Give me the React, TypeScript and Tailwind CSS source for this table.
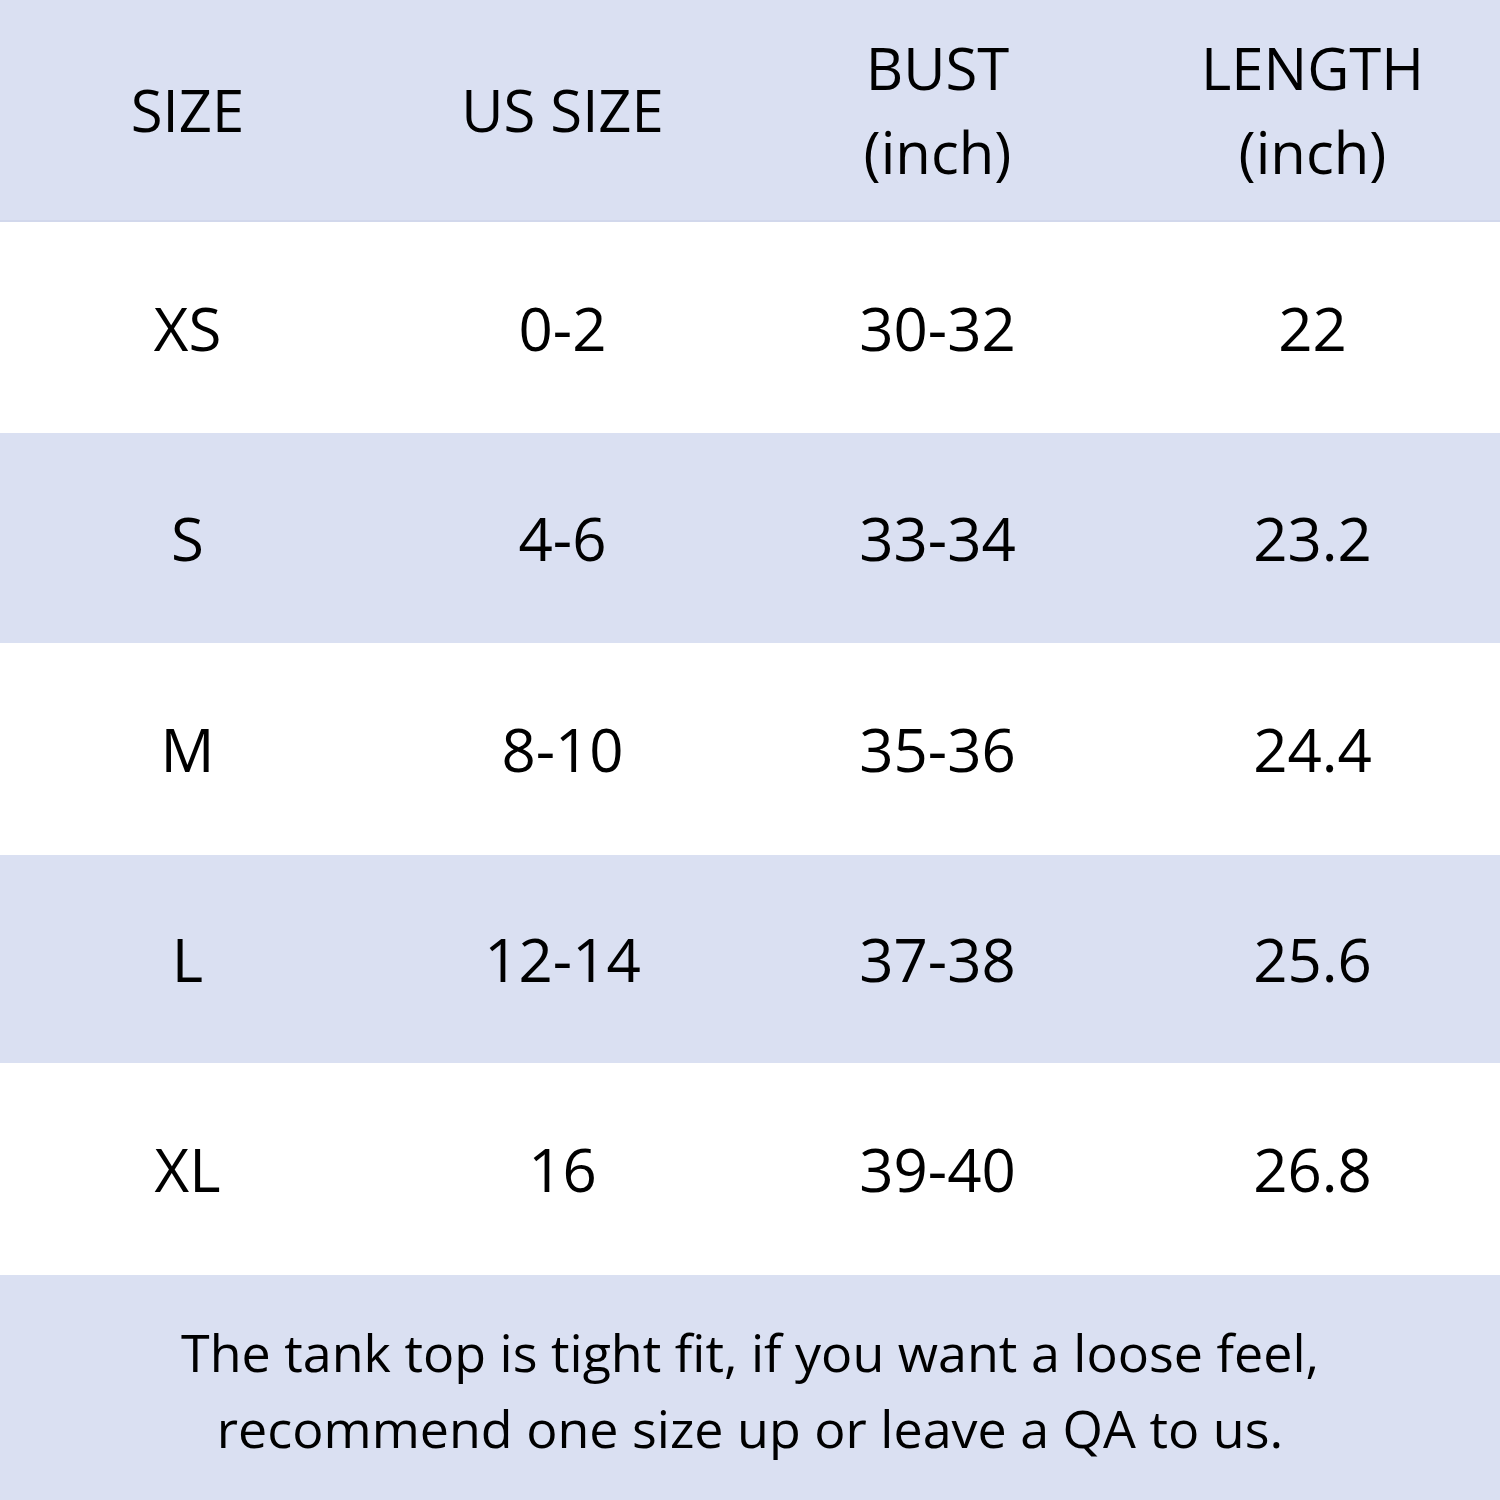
const rows = [
  ["XS", "0-2", "30-32", "22"],
  ["S", "4-6", "33-34", "23.2"],
  ["M", "8-10", "35-36", "24.4"],
  ["L", "12-14", "37-38", "25.6"],
  ["XL", "16", "39-40", "26.8"],
];

const heights = ["h-[211px]", "h-[210px]", "h-[212px]", "h-[208px]", "h-[212px]"];

export default function App() {
  return (
    <div
      className="w-[1500px] h-[1500px] flex flex-col text-black bg-white"
      style={{ fontFamily: '"Open Sans", "Noto Sans", sans-serif' }}
    >
      {/* header */}
      <div className="h-[222px] grid grid-cols-4 items-center text-center bg-[#dae0f2] border-b-2 border-[#d2d8ec] text-[58px] leading-[84px]">
        <div>SIZE</div>
        <div>US SIZE</div>
        <div>
          BUST
          <br />
          (inch)
        </div>
        <div>
          LENGTH
          <br />
          (inch)
        </div>
      </div>

      {rows.map((r, i) => (
        <div
          key={r[0]}
          className={`${heights[i]} grid grid-cols-4 items-center text-center text-[60px] leading-none ${
            i % 2 === 1 ? "bg-[#dae0f2]" : "bg-white"
          }`}
        >
          {r.map((c, j) => (
            <div key={j}>{c}</div>
          ))}
        </div>
      ))}

      {/* note */}
      <div className="flex-1 flex items-center justify-center text-center bg-[#dae0f2] text-[52px] leading-[76px] pt-1">
        <p>
          The tank top is tight fit, if you want a loose feel,
          <br />
          recommend one size up or leave a QA to us.
        </p>
      </div>
    </div>
  );
}
